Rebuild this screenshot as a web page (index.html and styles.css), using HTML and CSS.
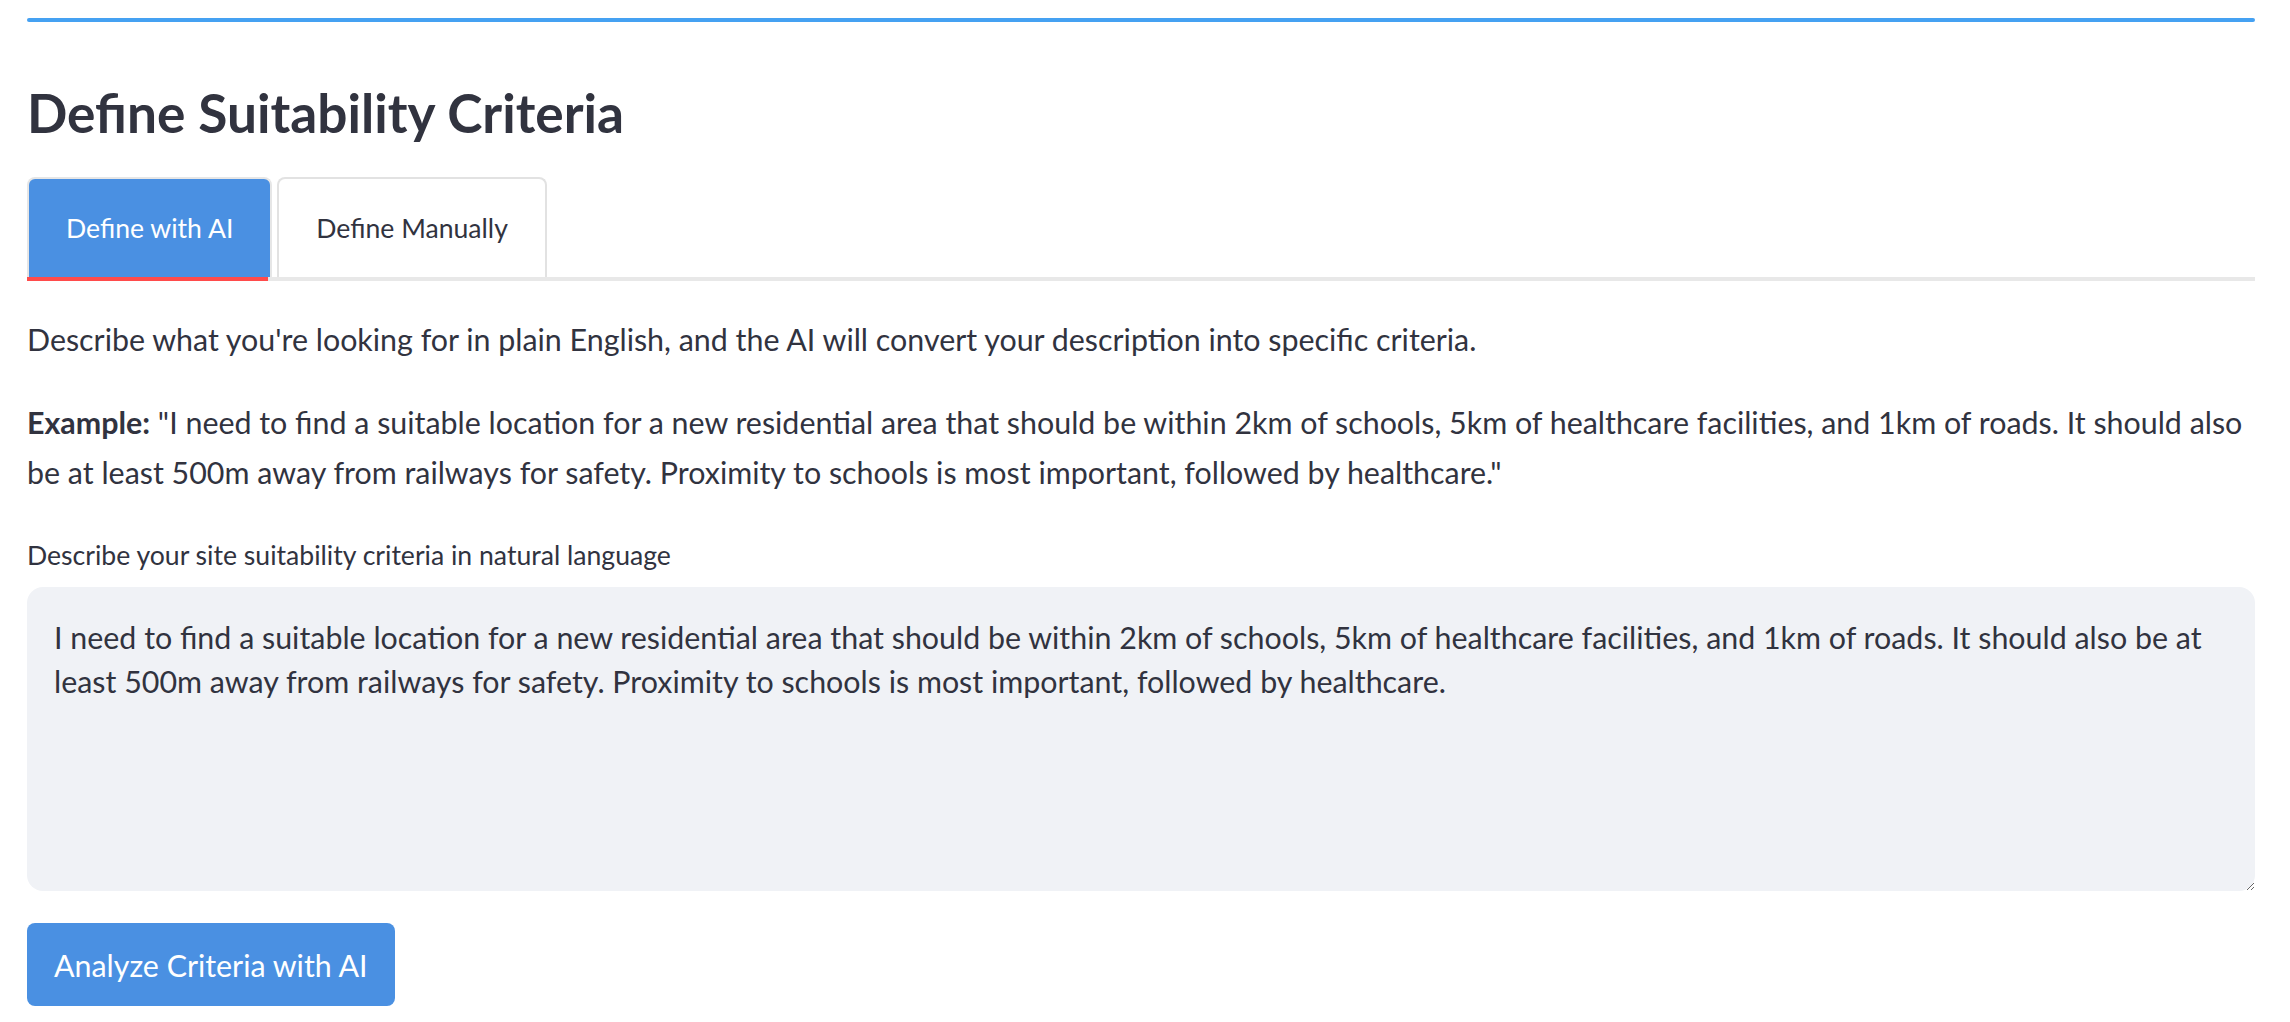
FILE: index.html
```html
<!DOCTYPE html>
<html lang="en">
<head>
<meta charset="utf-8">
<title>Define Suitability Criteria</title>
<link rel="stylesheet" href="styles.css">
</head>
<body>
<main class="page">
  <div class="topline"></div>
  <h3 class="title">Define Suitability Criteria</h3>
  <div class="tablist">
    <button class="tab tab-active">Define with AI</button>
    <button class="tab">Define Manually</button>
  </div>
  <p class="desc">Describe what you're looking for in plain English, and the AI will convert your description into specific criteria.</p>
  <p class="example"><strong>Example:</strong> "I need to find a suitable location for a new residential area that should be within 2km of schools, 5km of healthcare facilities, and 1km of roads. It should also be at least 500m away from railways for safety. Proximity to schools is most important, followed by healthcare."</p>
  <label class="label" for="criteria">Describe your site suitability criteria in natural language</label>
  <textarea id="criteria" class="input">I need to find a suitable location for a new residential area that should be within 2km of schools, 5km of healthcare facilities, and 1km of roads. It should also be at least 500m away from railways for safety. Proximity to schools is most important, followed by healthcare.</textarea>
  <button class="primary">Analyze Criteria with AI</button>
</main>
</body>
</html>
```
FILE: styles.css
```css
:root {
  --k: 0.95;
  --text: #31333f;
  --font: "Lato", "Liberation Sans", sans-serif;
}

html, body {
  margin: 0;
  background: #ffffff;
}

body {
  font-family: var(--font);
  color: var(--text);
}

.page {
  display: flex;
  flex-direction: column;
  padding: 18px 35px 0 27px;
}

.topline {
  height: 4px;
  background: #45a1f2;
  border-radius: 2px;
}

.title {
  margin: 54px 0 0;
  font-size: calc(56px * var(--k));
  line-height: 72px;
  font-weight: 700;
  color: #31333f;
}

.tablist {
  margin-top: 29px;
  display: flex;
  gap: 5px;
  border-bottom: 4px solid #e8e8e8;
}

.tab {
  position: relative;
  height: 100px;
  padding: 0 37px;
  border: 2px solid #e2e2e2;
  border-bottom: none;
  border-radius: 8px 8px 0 0;
  background: #ffffff;
  color: var(--text);
  font-family: var(--font);
  font-size: calc(28px * var(--k));
}

.tab-active {
  background: #4a90e2;
  color: #ffffff;
  border-color: #e6e6e6;
}

.tab-active::after {
  content: "";
  position: absolute;
  left: -2px;
  right: 2px;
  bottom: -4px;
  height: 4px;
  background: #ff4b4b;
}

.desc,
.example {
  margin: 33px 0 0;
  font-size: calc(32px * var(--k));
  line-height: 50px;
}

.example strong {
  font-weight: 700;
}

.label {
  margin-top: 38px;
  font-size: calc(28px * var(--k));
  line-height: 40px;
}

.input {
  margin-top: 12px;
  box-sizing: border-box;
  width: 100%;
  height: 304px;
  padding: 28px 27px;
  border: none;
  border-radius: 16px;
  background: #f0f2f6;
  color: var(--text);
  font-family: var(--font);
  font-size: calc(32px * var(--k));
  line-height: 44px;
  resize: vertical;
  outline: none;
}

.primary {
  margin-top: 32px;
  align-self: flex-start;
  height: 83px;
  padding: 0 27px;
  border: none;
  border-radius: 8px;
  background: #4a90e2;
  color: #ffffff;
  font-family: var(--font);
  font-size: calc(32px * var(--k));
}
```
